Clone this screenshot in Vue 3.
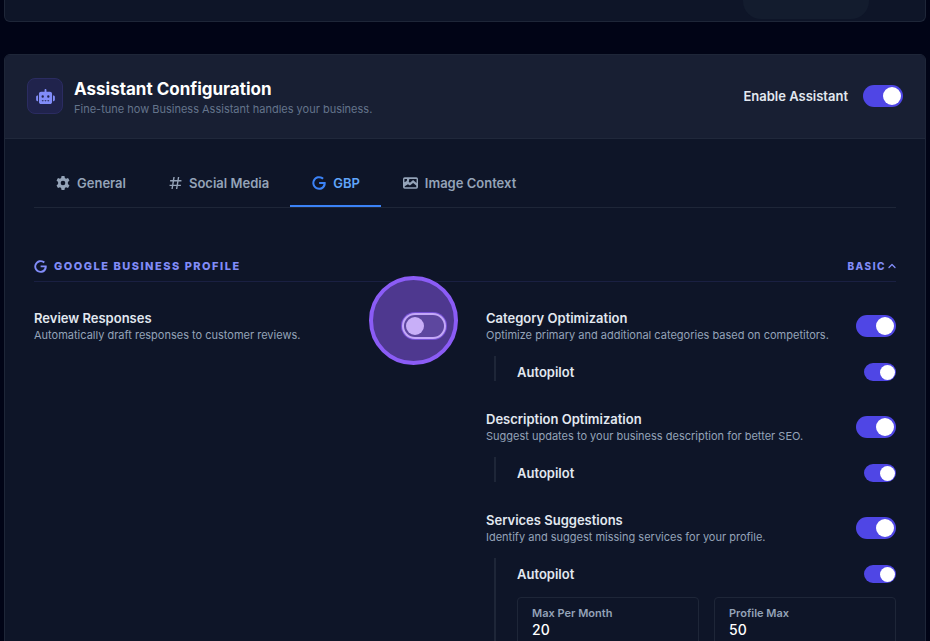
<template>
  <main class="page">
    <section class="card previous">
      <div class="pill"></div>
    </section>

    <section class="card">
      <!-- Card header -->
      <header class="card-header">
        <div class="bot-icon">
          <svg viewBox="0 0 640 512" width="19" height="15" fill="currentColor">
            <path
                fill-rule="evenodd"
                d="M320 0c17.700 0 32 14.300 32 32v64h120c39.800 0 72 32.200 72 72v272c0 39.800-32.200 72-72 72H168c-39.800 0-72-32.200-72-72V168c0-39.800 32.200-72 72-72h120V32c0-17.700 14.300-32 32-32zM208 384c-9 0-16 7-16 16s7 16 16 16h32c9 0 16-7 16-16s-7-16-16-16zm96 0c-9 0-16 7-16 16s7 16 16 16h32c9 0 16-7 16-16s-7-16-16-16zm96 0c-9 0-16 7-16 16s7 16 16 16h32c9 0 16-7 16-16s-7-16-16-16zM264 256a40 40 0 1 0-80 0 40 40 0 1 0 80 0zm152 40a40 40 0 1 0 0-80 40 40 0 1 0 0 80zM48 224h16v192H48c-26.500 0-48-21.500-48-48v-96c0-26.500 21.500-48 48-48zm544 0c26.500 0 48 21.500 48 48v96c0 26.500-21.500 48-48 48h-16V224z"
            />
          </svg>
        </div>
        <div class="heading">
          <h1>Assistant Configuration</h1>
          <p>Fine-tune how Business Assistant handles your business.</p>
        </div>
        <label class="enable" for="enable-assistant">Enable Assistant</label>
        <input id="enable-assistant" v-model="enabled" type="checkbox" class="toggle" />
      </header>

      <div class="card-body">
        <!-- Tabs -->
        <nav class="tabs">
          <button
              v-for="t in tabs"
              :key="t.name"
              type="button"
              class="tab"
              :class="{ active: activeTab === t.name }"
              @click="activeTab = t.name"
          >
            <svg :viewBox="t.box" :width="t.width" height="14" fill="currentColor">
              <path fill-rule="evenodd" :d="t.path" />
            </svg>
            {{ t.name }}
          </button>
        </nav>

        <!-- Section header -->
        <div class="section-header">
          <svg viewBox="0 0 24 24" width="13" height="13" fill="currentColor">
            <path :d="googlePath" />
          </svg>
          <h2>Google Business Profile</h2>
          <button type="button" class="level">
            Basic
            <svg viewBox="0 0 8 6" width="8" height="6" fill="none" stroke="currentColor" stroke-width="1.300">
              <path d="M1 4.500 4 1.500 7 4.500" stroke-linecap="round" stroke-linejoin="round" />
            </svg>
          </button>
        </div>

        <!-- Settings -->
        <div class="columns">
          <div class="column">
            <div class="setting">
              <div class="setting-row">
                <label class="setting-text" for="review">
                  <span class="title">Review Responses</span>
                  <span class="desc">Automatically draft responses to customer reviews.</span>
                </label>
                <span class="spotlight">
                  <input id="review" v-model="reviewResponses" type="checkbox" class="toggle focused" />
                </span>
              </div>
            </div>
          </div>

          <div class="column">
            <div v-for="s in settings" :key="s.id" class="setting">
              <div class="setting-row">
                <label class="setting-text" :for="s.id">
                  <span class="title">{{ s.title }}</span>
                  <span class="desc">{{ s.desc }}</span>
                </label>
                <input :id="s.id" v-model="s.on" type="checkbox" class="toggle" />
              </div>
              <div class="nested">
                <div class="autopilot">
                  <label class="title" :for="s.id + '-auto'">Autopilot</label>
                  <input :id="s.id + '-auto'" v-model="s.autopilot" type="checkbox" class="toggle small" />
                </div>
                <div v-if="s.limits" class="limits">
                  <div v-for="l in s.limits" :key="l.id" class="limit">
                    <label :for="l.id">{{ l.label }}</label>
                    <input :id="l.id" v-model="l.value" type="text" inputmode="numeric" />
                  </div>
                </div>
              </div>
            </div>
          </div>
        </div>
      </div>
    </section>
  </main>
</template>

<script setup>
import { ref } from 'vue'

const googlePath = 'M12.200 10.300v3.200h7.500c-.6 3.900-3.600 6.700-7.500 6.700A8.200 8.200 0 1 1 17.700 5.900l2.500-2.500A11.700 11.700 0 1 0 12.200 23.700c6.700 0 11.300-4.700 11.300-11.400 0-.7-.1-1.400-.2-2z'

const tabs = [
  {
    name: 'General',
    box: '0 0 24 24',
    width: 14,
    path: 'M9.500 0h5l.7 3.500 2 1.200 3.400-1.200 2.500 4.300-2.700 2.400v3.600l2.700 2.400-2.500 4.300-3.400-1.200-2 1.200-.7 3.500h-5l-.7-3.500-2-1.200-3.400 1.200-2.500-4.300 2.700-2.400v-3.600L.9 7.800l2.500-4.300 3.400 1.200 2-1.200zM12 8a4 4 0 1 0 0 8 4 4 0 0 0 0-8z',
  },
  {
    name: 'Social Media',
    box: '0 0 24 24',
    width: 13,
    path: 'M8 1h2.600l-.9 5.500h5.800L16.400 1H19l-.9 5.500H23V9h-5.300l-1 6H22v2.500h-5.700L15.400 23h-2.600l.9-5.500H7.900L7 23H4.400l.9-5.500H1V15h4.700l1-6H2V6.500h5.100zM9.300 9l-1 6h5.800l1-6z',
  },
  { name: 'GBP', box: '0 0 24 24', width: 14, path: googlePath },
  {
    name: 'Image Context',
    box: '0 0 26 24',
    width: 15,
    path: 'M3 2h20a3 3 0 0 1 3 3v14a3 3 0 0 1-3 3H3a3 3 0 0 1-3-3V5a3 3 0 0 1 3-3zm-.5 3v5.500l4-2 .5-3.500zM11 5l-1 5 2 1.500L17.500 7l6 5V5zM3 19.500h20v-3l-5.500-4.500-5.500 4.500-3.500-2.500L3 17.500z',
  },
]

const activeTab = ref('GBP')
const enabled = ref(true)
const reviewResponses = ref(false)

const settings = ref([
  {
    id: 'category',
    title: 'Category Optimization',
    desc: 'Optimize primary and additional categories based on competitors.',
    on: true,
    autopilot: true,
  },
  {
    id: 'description',
    title: 'Description Optimization',
    desc: 'Suggest updates to your business description for better SEO.',
    on: true,
    autopilot: true,
  },
  {
    id: 'services',
    title: 'Services Suggestions',
    desc: 'Identify and suggest missing services for your profile.',
    on: true,
    autopilot: true,
    limits: [
      { id: 'max-month', label: 'Max Per Month', value: '20' },
      { id: 'profile-max', label: 'Profile Max', value: '50' },
    ],
  },
])
</script>

<style>
body {
  margin: 0;
  background: #010416;
}
</style>

<style scoped>
*,
*::before {
  box-sizing: border-box;
}

.page {
  height: 100vh;
  overflow: hidden;
  padding: 0 4px;
  font-family: Inter, 'Liberation Sans', sans-serif;
  color: #e2e8f0;
}

h1,
h2,
p {
  margin: 0;
}

button,
input {
  font: inherit;
  color: inherit;
}

button {
  background: none;
  border: 0;
  padding: 0;
  cursor: pointer;
}

.card {
  background: #0e1528;
  border: 1px solid #1e2638;
  border-radius: 6px;
  overflow: hidden;
}

.previous {
  display: flex;
  justify-content: flex-end;
  border-top: 0;
  border-radius: 0 0 6px 6px;
  padding: 0 56px 2px 0;
  margin-bottom: 32px;
}

.pill {
  width: 126px;
  height: 19px;
  border-radius: 0 0 18px 18px;
  background: #131c2e;
}

/* Card header */
.card-header {
  display: flex;
  align-items: center;
  padding: 20px 22px 21px;
  background: #181f33;
  border-bottom: 1px solid #20283b;
}

.bot-icon {
  display: flex;
  align-items: center;
  justify-content: center;
  width: 36px;
  height: 36px;
  border: 1px solid #2b2c61;
  border-radius: 8px;
  background: #20234c;
  color: #818cf8;
}

.heading {
  flex: 1;
  margin: 2px 0 0 11px;
}

.heading h1 {
  font-size: 17px;
  line-height: 24px;
  font-weight: 700;
  color: #fff;
}

.heading p {
  font-size: 11px;
  line-height: 16px;
  color: #64748b;
}

.enable {
  margin-right: 15px;
  font-size: 13px;
  font-weight: 600;
}

/* Toggle */
.toggle {
  appearance: none;
  flex: none;
  display: flex;
  align-items: center;
  width: 40px;
  height: 22px;
  margin: 0;
  padding: 0 2px;
  border-radius: 11px;
  background: #334155;
  cursor: pointer;
}

.toggle::before {
  content: '';
  width: 18px;
  height: 18px;
  border-radius: 50%;
  background: #fff;
}

.toggle:checked {
  justify-content: flex-end;
  background: #4f46e5;
}

.toggle.small {
  width: 32px;
  height: 18px;
  padding: 0 1px;
}

.toggle.small::before {
  width: 15px;
  height: 15px;
}

.toggle.focused {
  position: relative;
  background: #5d479f;
  box-shadow: 0 0 0 2px #c4a8f8, 0 0 0 3px #7651d6;
}

.toggle.focused::before {
  background: #c8aff8;
}

.spotlight {
  position: relative;
  flex: none;
}

.spotlight::before {
  content: '';
  position: absolute;
  top: -39px;
  left: -35px;
  width: 89px;
  height: 89px;
  border: 4px solid #8b5cf6;
  border-radius: 50%;
  background: #4e388f;
}

/* Tabs */
.card-body {
  padding: 21px 29px;
}

.tabs {
  display: flex;
  border-bottom: 1px solid #1e2638;
}

.tab {
  display: flex;
  align-items: center;
  gap: 7px;
  height: 47px;
  padding: 0 21px 0 22px;
  border-bottom: 2px solid transparent;
  border-radius: 2px 2px 0 0;
  font-size: 13px;
  font-weight: 600;
  color: #94a3b8;
}

.tab.active {
  color: #60a5fa;
  border-bottom-color: #3b82f6;
}

.tab.active svg {
  color: #3b82f6;
}

/* Section header */
.section-header {
  display: flex;
  align-items: center;
  gap: 7px;
  margin-top: 50px;
  padding-bottom: 7px;
  border-bottom: 1px solid #1a2042;
  color: #818cf8;
}

.section-header h2 {
  flex: 1;
  font-size: 11px;
  line-height: 16px;
  font-weight: 800;
  letter-spacing: 1.5px;
  text-transform: uppercase;
}

.level {
  display: flex;
  align-items: center;
  gap: 2px;
  font-size: 10px;
  font-weight: 800;
  letter-spacing: 1.5px;
  text-transform: uppercase;
}

/* Settings */
.columns {
  display: grid;
  grid-template-columns: 1fr 1fr;
  gap: 42px;
  margin-top: 27px;
}

.setting {
  margin-bottom: 29px;
}

.setting-row,
.autopilot {
  display: flex;
  align-items: center;
  justify-content: space-between;
}

.spotlight,
.setting-text {
  display: flex;
  flex-direction: column;
}

.title {
  font-size: 13px;
  line-height: 18px;
  font-weight: 600;
}

.desc {
  font-size: 11px;
  line-height: 16px;
  color: #94a3b8;
}

.nested {
  margin: 13px 0 0 8px;
  padding: 7px 0 0 21px;
  border-left: 2px solid #1e2638;
}

.limits {
  display: grid;
  grid-template-columns: 1fr 1fr;
  gap: 15px;
  margin-top: 14px;
}

.limit {
  display: flex;
  flex-direction: column;
  padding: 7px 14px;
  border: 1px solid #1e2638;
  border-radius: 4px;
}

.limit label {
  font-size: 11px;
  line-height: 16px;
  font-weight: 600;
  color: #94a3b8;
}

.limit input {
  width: 100%;
  height: 16px;
  padding: 0;
  border: 0;
  outline: 0;
  background: none;
  font-size: 14px;
  font-weight: 500;
  color: #fff;
}
</style>
